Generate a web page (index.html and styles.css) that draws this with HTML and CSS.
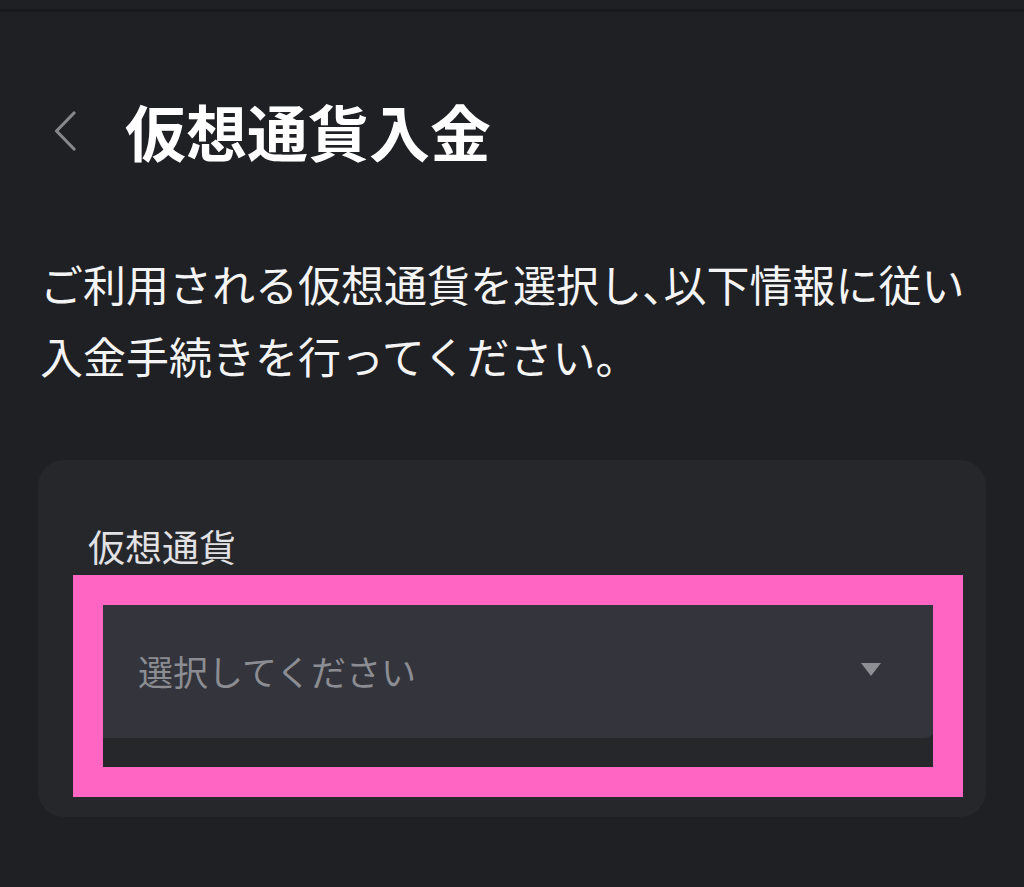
FILE: index.html
```html
<!doctype html>
<html lang="ja">
<head>
<meta charset="utf-8">
<title>仮想通貨入金</title>
<link rel="stylesheet" href="styles.css">
</head>
<body>
<div class="topbar"></div>
<header class="head">
  <button class="back" aria-label="戻る">
    <svg width="24" height="40" viewBox="0 0 24 40"><path d="M21 2 L3.5 20 L21 38" fill="none" stroke="#86878c" stroke-width="3.2" stroke-linecap="round" stroke-linejoin="round"/></svg>
  </button>
  <h1>仮想通貨入金</h1>
</header>
<p class="lead">ご利用される仮想通貨を選択し<span class="half">、</span>以下情報に従い<br>入金手続きを行ってください。</p>
<section class="card">
  <div class="label">仮想通貨</div>
  <div class="field">
    <div class="select">
      <span class="placeholder">選択してください</span>
      <span class="caret"></span>
    </div>
    <div class="mark"></div>
  </div>
</section>
</body>
</html>
```

FILE: styles.css
```css
body {
    margin: 0;
    background: #1f2024;
    color: #fff;
    font-family: "Noto Sans CJK JP", "Noto Sans", sans-serif;
}
.topbar {
    height: 9px;
    border-bottom: 3px solid #17181b;
}
.head {
    display: flex;
    align-items: center;
    padding: 79px 0 0 53px;
    height: 80px;
}
.back {
    background: none;
    border: 0;
    padding: 0;
    width: 72px;
    height: 40px;
    display: flex;
    align-items: center;
}
.head h1 {
    margin: 0;
    font-size: 61px;
    line-height: 80px;
    font-weight: 700;
}
.lead {
    margin: 76px 0 0 40px;
    font-size: 43px;
    line-height: 72px;
    font-weight: 400;
    color: #f4f4f5;
}
.lead .half {
    font-feature-settings: "halt";
}
.card {
    margin: 69px 38px 0;
    padding: 61px 50px 79px;
    background: #26272b;
    border-radius: 26px;
}
.label {
    font-size: 37px;
    line-height: 50px;
    color: #e2e2e4;
}
.field {
    position: relative;
    margin-top: 25px;
}
.select {
    height: 142px;
    background: #33343c;
    border-radius: 12px;
    display: flex;
    align-items: center;
    justify-content: space-between;
    padding: 0 55px 0 50px;
}
.placeholder {
    font-size: 35px;
    color: #8c8d93;
    margin-top: 6px;
}
.caret {
    width: 0;
    height: 0;
    border-left: 10px solid transparent;
    border-right: 10px solid transparent;
    border-top: 13px solid #8e8f94;
    margin-top: 4px;
}
.mark {
    position: absolute;
    left: -15px;
    right: -27px;
    top: -21px;
    bottom: -59px;
    border: 30px solid #ff66c4;
    pointer-events: none;
}
```
